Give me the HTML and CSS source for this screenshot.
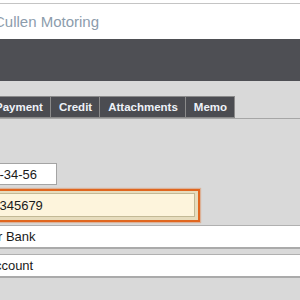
FILE: index.html
```html
<!DOCTYPE html>
<html>
<head>
<meta charset="utf-8">
<link rel="stylesheet" href="styles.css">
</head>
<body>
<div class="page">
  <div class="topline"></div>
  <div class="titlebar"><span class="title">Cullen Motoring</span></div>
  <div class="darkbar"></div>
  <div class="content">
    <div class="tabs">
      <div class="tab tab-first">Payment</div>
      <div class="tab">Credit</div>
      <div class="tab">Attachments</div>
      <div class="tab">Memo</div>
    </div>
    <div class="form">
      <div class="field field-short"><span>12-34-56</span></div>
      <div class="focus-ring">
        <div class="field field-focus"><span>12345679</span></div>
      </div>
      <div class="field field-wide field-bank"><span>Your Bank</span></div>
      <div class="field field-wide field-last"><span>Current Account</span></div>
    </div>
  </div>
</div>
</body>
</html>
```
FILE: styles.css
```css
html, body {
  margin: 0;
  padding: 0;
  width: 300px;
  height: 300px;
  overflow: hidden;
  background: #d9d9d9;
}
.page {
  width: 300px;
  font-family: "Liberation Sans", Arial, sans-serif;
}
.topline {
  height: 3px;
  background: #ffffff;
  border-bottom: 1px solid #c4c4c4;
}
.titlebar {
  height: 35px;
  background: #ffffff;
  display: flex;
  align-items: center;
  overflow: hidden;
}
.title {
  margin-left: -6px;
  font-family: "Liberation Sans", Arial, sans-serif;
  font-size: 15px;
  color: #8c9cac;
  white-space: nowrap;
}
.darkbar {
  height: 42px;
  background: #4e4f54;
}
.content {
  background: #d9d9d9;
  padding-top: 15px;
  height: 220px;
}
.tabs {
  display: flex;
  height: 22px;
  border-bottom: 1px solid #a6a6a6;
}
.tab {
  background: #4b4c51;
  color: #eef2f8;
  font-weight: bold;
  font-size: 11.5px;
  line-height: 20px;
  padding: 0 7px 0 8px;
  border: 1px solid #8a8a8a;
  border-left: none;
  white-space: nowrap;
}
.tab-first {
  margin-left: -13px;
}
.form {
  padding-top: 44px;
  display: flex;
  flex-direction: column;
}
.field {
  background: #ffffff;
  font-size: 13px;
  color: #1a1a1a;
  white-space: nowrap;
  overflow: hidden;
  display: flex;
  align-items: center;
}
.field-short {
  width: 56px;
  height: 20px;
  border: 1px solid #a4a4a4;
  border-left: none;
}
.field-short span {
  margin-left: -15px;
}
.focus-ring {
  margin-top: 4px;
  width: 195px;
  border: 2px solid #e0661f;
  border-left: none;
  padding: 2px 3px 3px 0;
  background: #e6dcbd;
  box-shadow: 0 0 1px 1px rgba(224,102,31,0.35);
}
.field-focus {
  height: 22px;
  background: #fdf4dc;
  border: 1px solid #c3b996;
  border-left: none;
}
.field-focus span {
  margin-left: -15px;
}
.field-wide {
  margin-top: 3px;
  height: 21px;
  border-top: 1px solid #b0b0b0;
  border-bottom: 2px solid #aaaaaa;
}
.field-bank span {
  margin-left: -24px;
}
.field-last {
  margin-top: 5px;
}
.field-last span {
  margin-left: -60px;
}
```
